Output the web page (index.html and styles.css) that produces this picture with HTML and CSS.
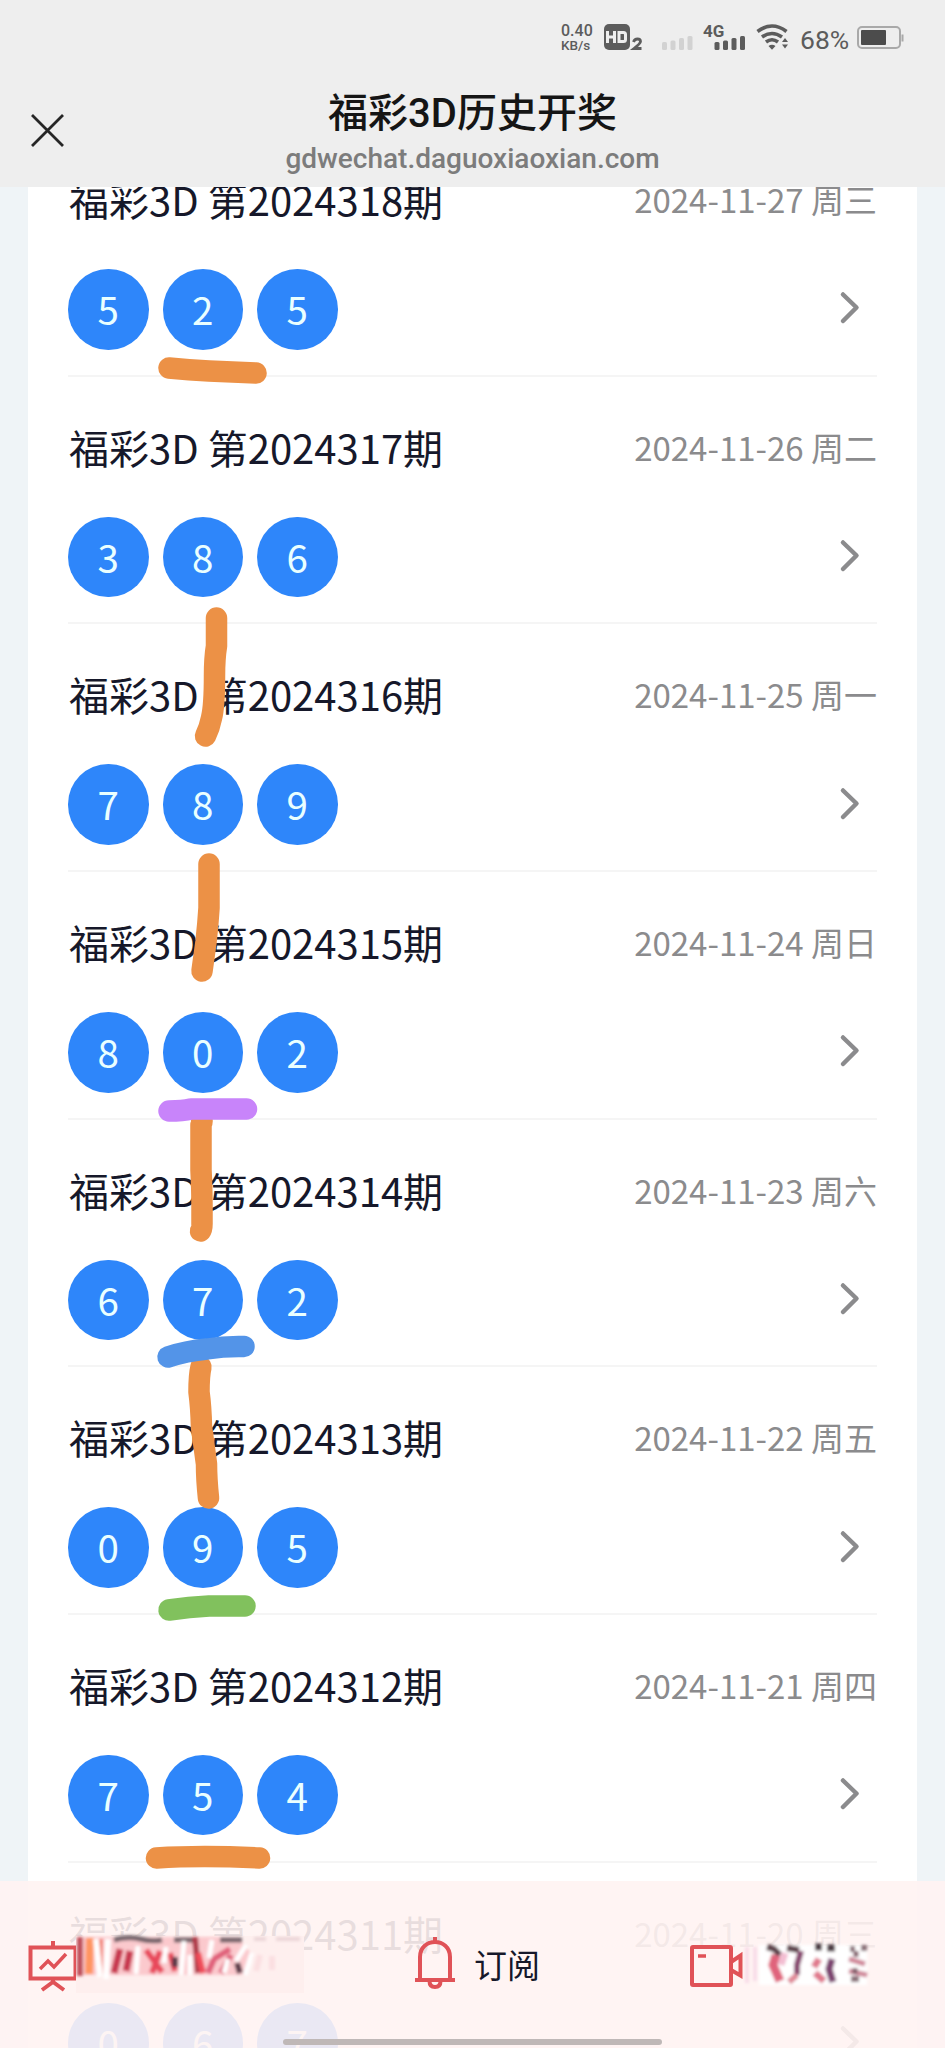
FILE: index.html
```html
<!DOCTYPE html>
<html lang="zh-CN">
<head>
<meta charset="utf-8">
<title>福彩3D历史开奖</title>
<link rel="stylesheet" href="styles.css">
</head>
<body>
<div class="screen">
  <header class="top">
    <div class="status">
      <div class="speed"><span>0.40</span><span>KB/s</span></div>
      <svg class="status-icons" width="188" height="32" viewBox="0 0 188 32">
        <rect x="1" y="2" width="26" height="26" rx="5" fill="#5c5c5c"/>
        <path d="M4.500 9v12M11.500 9v12M4.500 15h7M16 10.500v9h4.500q2 0 2-2v-5q0-2-2-2z" fill="none" stroke="#eee" stroke-width="3"/>
        <path d="M30.500 20q1-3 4-3 3 0 3 2.500 0 2-6.500 7h7.500" fill="none" stroke="#5c5c5c" stroke-width="2.800"/>
        <g fill="#d2d2d2"><rect x="59" y="20" width="5" height="8" rx="1.500"/><rect x="67.500" y="18.500" width="5" height="9.500" rx="1.500"/><rect x="76" y="16" width="5" height="12" rx="1.500"/><rect x="84.500" y="14" width="5" height="14" rx="1.500"/></g>
        <g fill="#5c5c5c"><rect x="111.500" y="20" width="5" height="8" rx="1.500"/><rect x="120" y="18.500" width="5" height="9.500" rx="1.500"/><rect x="128.500" y="16" width="5" height="12" rx="1.500"/><rect x="137" y="14" width="5" height="14" rx="1.500"/></g>
        <text class="net" x="100" y="14.500">4G</text>
        <g fill="none" stroke="#5c5c5c" stroke-width="3.600"><path d="M154.500 9.500q14.500-11 29 0"/><path d="M159 15q10-7 20 0"/><path d="M163 20q6-4.500 12 0"/></g>
        <path d="M165.500 24q3.500-2.500 7 0l-3.500 3.800zM179 20l3-4 3 4zM179 22.500h6l-3 4z" fill="#5c5c5c"/>
      </svg>
      <span class="percent">68%</span>
      <svg class="battery" width="48" height="26" viewBox="0 0 48 26"><rect x="1" y="2" width="42" height="21" rx="4" fill="none" stroke="#a9a9a9" stroke-width="2"/><rect x="4" y="5" width="25" height="15" rx="1" fill="#4c4c4c"/><path d="M45.500 9.500v7" stroke="#a9a9a9" stroke-width="2"/></svg>
    </div>
    <div class="nav">
      <svg class="close" width="34" height="34" viewBox="0 0 34 34"><path d="M1 1l31 31M32 1L1 32" stroke="#262626" stroke-width="2.800" fill="none"/></svg>
      <div class="heading"><h1>福彩3D历史开奖</h1><p>gdwechat.daguoxiaoxian.com</p></div>
    </div>
  </header>
  <main class="viewport"><div class="list" id="list"></div></main>
  <footer class="bar">
    <div class="tab tab-trend">
      <svg width="50" height="52" viewBox="0 0 50 52"><g fill="none" stroke="#e05257" stroke-width="4"><path d="M2.500 6.500h45v31h-45zM25 0v6M25 38v5M14 49l11-8 11 8"/><path d="M12 28l8-8 6 6 12-13" stroke-width="3.500"/></g></svg>
      <svg class="smudge" width="236" height="66" viewBox="0 0 236 66">
        <defs><filter id="soft"><feGaussianBlur stdDeviation="1.700"/></filter></defs>
        <rect x="0" y="5" width="228" height="57" fill="#feefee"/>
        <g filter="url(#soft)" fill="none">
          <path d="M2 6h160l16 20-10 18H2z" fill="#fbc9cd"/>
          <path d="M4 6v39" stroke="#c0505a" stroke-width="6"/><path d="M14 7l-1 36" stroke="#ff9560" stroke-width="8"/><path d="M24 8v38" stroke="#f0705c" stroke-width="5"/>
          <path d="M20 8l4 38M32 8l-2 40" stroke="#fff" stroke-width="6"/>
          <path d="M38 9q14-4 26-1t22 1M98 9h22M144 9h22" stroke="#75646a" stroke-width="5"/>
          <path d="M44 18l-6 24M54 20l-4 20" stroke="#c8384f" stroke-width="7"/>
          <path d="M70 19l16 22M84 20l-8 22M94 22l5 18" stroke="#e8485c" stroke-width="6"/>
          <path d="M119 6l3 36" stroke="#b03a48" stroke-width="6"/><path d="M122 22l5 20" stroke="#f04c58" stroke-width="6"/>
          <path d="M154 18l-16 10-6 14M155 24l-10 18" stroke="#e0607a" stroke-width="6"/><path d="M161 32l3 10M99 26v10" stroke="#5a3b48" stroke-width="6"/>
          <path d="M62 15l-2 28M90 16l-2 16M108 10l-3 34M114 24v20M136 9l-3 18M152 28l-4 14M170 14l-10 16M176 22l-7 22" stroke="#fff" stroke-width="5"/>
          <path d="M178 8h12M200 8h24" stroke="#ecd6d8" stroke-width="4"/><path d="M184 24l-4 16M196 25v14" stroke="#fbdfe1" stroke-width="6"/>
        </g>
      </svg>
    </div>
    <div class="tab tab-sub">
      <svg width="40" height="52" viewBox="0 0 40 52"><g fill="none" stroke="#e05257" stroke-width="4"><path d="M5 42V20C5 0 35 0 35 20v22M0 43h40M20 0v6M14.500 44q0 6 5.500 6t5.500-6"/></g></svg>
      <span>订阅</span>
    </div>
    <div class="tab tab-live">
      <svg width="53" height="42" viewBox="0 0 53 42"><g fill="none" stroke="#e05257" stroke-width="4"><rect x="2" y="2" width="39" height="38" rx="1"/><path d="M41 17l9.500-6.500v20L41 25"/><path d="M8 11h8" stroke-width="3.500"/></g></svg>
      <svg class="smudge" width="130" height="50" viewBox="0 0 130 50">
        <g filter="url(#soft)" fill="none">
          <path d="M16 4h108v40H16z" fill="#fff"/>
          <path d="M4 6v36M12 6v34" stroke="#f8dce8" stroke-width="4"/>
          <path d="M24 6l7 2 6 6M44 7l12 2" stroke="#5c4048" stroke-width="6"/>
          <path d="M33 14l-3 10 7 16" stroke="#e0647c" stroke-width="9"/>
          <path d="M42 12l-4 12" stroke="#f3bdd2" stroke-width="7"/>
          <path d="M58 10l-4 14v10" stroke="#87456e" stroke-width="6"/><path d="M54 34l-8 7" stroke="#e08a98" stroke-width="6"/>
          <path d="M72 6h7M84 7h8" stroke="#4c3a42" stroke-width="7"/>
          <path d="M76 18l-5 8M72 32l9 8" stroke="#e0788c" stroke-width="7"/>
          <path d="M89 18l-3 10 4 13" stroke="#7c4270" stroke-width="7"/>
          <path d="M107 8h5M118 7h6M108 38h8" stroke="#8a7078" stroke-width="6"/>
          <path d="M106 18l16 5M106 30l18 4" stroke="#d0889a" stroke-width="5"/><path d="M113 10v6M112 27v6" stroke="#83606c" stroke-width="5"/>
        </g>
      </svg>
    </div>
    <div class="home"></div>
  </footer>
  <svg class="marks" width="945" height="2048" viewBox="0 0 945 2048">
    <g fill="none" stroke="#ec9146" stroke-width="21.500" stroke-linecap="round" stroke-linejoin="round">
      <path d="M169 368q20 2 40 3l47 2"/>
      <path d="M216.500 618v28q-2 12-2 30c0 26-1 34-3 42q-2 10-6 18"/>
      <path d="M209 864v44q-1 16-3 34l-4 29"/>
      <path d="M201 1117q2 4 0 8v45q1 20 1 35v19q0 5-1.500 7"/>
      <path d="M201 1367q-2 8-2 25 2 15 2.500 35l5 37q0 15 2 34"/>
      <path d="M156.500 1858q45-3 103 0"/>
    </g>
    <g fill="none" stroke-width="21.500" stroke-linecap="round" stroke-linejoin="round">
      <path d="M169 1111q14 0 22-2h55.500" stroke="#c884fa"/>
      <path d="M168 1357q18-6 39-8 18-3 37-2.500" stroke="#5394e8"/>
      <path d="M169 1610q20-3 40-4h36" stroke="#81c15d"/>
    </g>
  </svg>
</div>
<script src="list.js"></script>
</body>
</html>
```

FILE: styles.css
```css
* { box-sizing: border-box; margin: 0; }
body { font-family: "Noto Sans CJK SC", sans-serif; background: #eff4f7; }
.screen { position: relative; width: 945px; height: 2048px; overflow: hidden; display: flex; flex-direction: column; }

.top { height: 187px; flex: none; background: #eee; font-family: Roboto, "Noto Sans CJK SC", sans-serif; }
.status { height: 76px; padding: 0 40px 0 0; display: flex; justify-content: flex-end; align-items: center; color: #5c5c5c; }
.speed { display: flex; flex-direction: column; width: 42px; font-size: 16px; line-height: 14px; font-weight: 500; }
.speed span:last-child { font-size: 13.500px; }
.status-icons { display: block; }
.net { font: 700 17px Roboto, sans-serif; fill: #5c5c5c; }
.percent { font-size: 26.500px; margin-left: 9px; width: 57px; line-height: 30px; padding-top: 4px; }
.battery { display: block; }
.nav { display: flex; align-items: flex-start; padding-left: 31px; }
.close { flex: none; margin-top: 38px; }
.heading { width: 815px; text-align: center; }
.heading h1 { font-size: 40px; font-weight: 500; line-height: 56px; color: #151515; padding-top: 10px; }
.heading p { font-size: 28px; line-height: 34px; color: #7c7c7c; font-weight: 500; }

.viewport { flex: 1; min-height: 0; overflow: hidden; padding: 0 28px; }
.list { background: #fff; padding: 0 40px; margin-top: -57.800px; }
.row { height: 247.640px; border-bottom: 2px solid #f5f5f5; display: flex; flex-direction: column; padding-top: 40px; }
.line { display: flex; justify-content: space-between; align-items: center; height: 60px; padding-left: 1px; }
.issue { font-size: 40px; line-height: 60px; color: #16182a; }
.date { font-size: 33px; line-height: 60px; color: #8b8b8d; }
.draw { display: flex; align-items: center; gap: 14px; margin-top: 40px; }
.ball { width: 80.500px; height: 80.500px; border-radius: 50%; background: #2e86fa; color: #eaffff; font-size: 38.500px; line-height: 79px; text-align: center; }
.chevron { margin-left: auto; margin-right: 16px; }

.bar { position: absolute; left: 0; right: 0; bottom: 0; height: 167px; background: rgba(255, 243, 242, 0.9); }
.tab { display: flex; align-items: center; position: absolute; }
.tab-trend { left: 28px; top: 56px; }
.tab-sub { left: 415px; top: 55px; gap: 19px; color: #16182a; font-size: 33px; line-height: 52px; }
.tab-sub span { padding-top: 2px; }
.tab-live { left: 690px; top: 60px; }
.tab-trend .smudge { margin: -6px 0 0 -2px; }
.home { position: absolute; left: 283px; bottom: 3px; width: 379px; height: 6px; border-radius: 3px; background: #bfb8b7; }
.marks { position: absolute; left: 0; top: 0; pointer-events: none; }
```

FILE: list.js
```js
const draws = [
  ["2024318", "2024-11-27 周三", "525"],
  ["2024317", "2024-11-26 周二", "386"],
  ["2024316", "2024-11-25 周一", "789"],
  ["2024315", "2024-11-24 周日", "802"],
  ["2024314", "2024-11-23 周六", "672"],
  ["2024313", "2024-11-22 周五", "095"],
  ["2024312", "2024-11-21 周四", "754"],
  ["2024311", "2024-11-20 周三", "067"]
];
document.getElementById("list").innerHTML = draws.map(([issue, date, balls]) => `
  <section class="row">
    <div class="line"><span class="issue">福彩3D 第${issue}期</span><span class="date">${date}</span></div>
    <div class="draw">${[...balls].map(n => `<span class="ball">${n}</span>`).join("")}
      <svg class="chevron" width="22" height="36" viewBox="0 0 22 36"><path d="M4 3.500l13.500 13L4 30" fill="none" stroke="#8b8b8d" stroke-width="4.500" stroke-linecap="round" stroke-linejoin="round"/></svg>
    </div>
  </section>`).join("");
```
